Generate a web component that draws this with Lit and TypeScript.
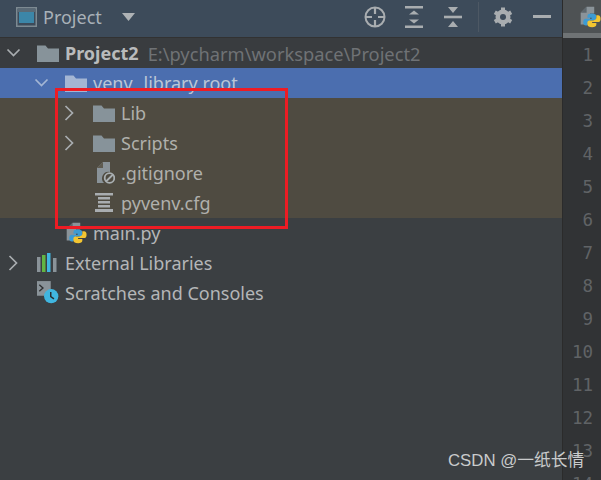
import { LitElement, html, css, svg } from "lit";
import { customElement } from "lit/decorators.js";

const folder = (fill = "#87939a") => html`<svg width="22" height="18" viewBox="0 0 22 18"><path d="M0 1.500h8.500l2.500 3H22V18H0z" fill="${fill}"/></svg>`;
const python = svg`
  <path d="M2 22V8l7-7h9v8H13v13z" fill="#8a9399"/>
  <path d="M9 1v7H2z" fill="#5d666c"/>
  <path d="M15 9c-3 0-5 .8-5 3v2h5v1H8c-2 0-3 1.600-3 4s1 4 3 4h2v-3c0-1.800 1.500-3 3.500-3H18c1.500 0 2.500-1 2.500-2.500V12c0-2-2-3-5.500-3z" fill="#3d9bd3"/>
  <path d="M15.500 28c3 0 5-.8 5-3v-2h-5v-1h7c2 0 3-1.600 3-4s-1-4-3-4h-2v3c0 1.800-1.500 3-3.500 3H12.500c-1.500 0-2.500 1-2.500 2.500V25c0 2 2 3 5.500 3z" fill="#f3c531" transform="translate(0 -3)"/>
`;
const pyIcon = html`<svg width="22" height="24" viewBox="0 0 26 26">${python}</svg>`;
const gitIgnore = html`<svg width="22" height="24" viewBox="0 0 22 24"><path d="M4 22V7l6-6h7v10a6.500 6.500 0 0 0-6 11z" fill="#8a9399"/><path d="M10 1v6H4z" fill="#5f5b50"/><circle cx="16.500" cy="17" r="4.800" fill="none" stroke="#a9afb2" stroke-width="1.800"/><path d="M13 20.500l7-7" stroke="#a9afb2" stroke-width="1.800"/></svg>`;
const cfg = html`<svg width="22" height="22" viewBox="0 0 22 22" fill="#a9adb0"><path d="M2 1h18v2.500H2z"/><path d="M5 5h12v2.500H5zM5 9h12v2.500H5zM5 13h12v2.500H5z"/><path d="M2 17h18v3H2z"/></svg>`;
const libs = html`<svg width="22" height="20" viewBox="0 0 22 20"><rect x="0" y="4" width="3.500" height="15" fill="#8a9399"/><rect x="5" y="2" width="3.500" height="17" fill="#62b543"/><rect x="10" y="0" width="3.500" height="19" fill="#40b6e0"/><rect x="16" y="5" width="3.500" height="14" fill="#8a9399"/></svg>`;
const scratches = html`<svg width="24" height="26" viewBox="0 0 24 26"><path d="M0 0h15v16H0z" fill="#8a9399"/><path d="M2.500 4l4 3.500-4 3.500" fill="none" stroke="#2f3133" stroke-width="1.500"/><circle cx="15.500" cy="16.500" r="7.800" fill="#40b6e0"/><path d="M15 12v5l3.500 2.500" fill="none" stroke="#2b2d30" stroke-width="1.600"/></svg>`;

interface Row { depth: number; label: string; hint?: string; icon: unknown; open?: boolean; tone?: string; bold?: boolean; }
const rows: Row[] = [
  { depth: 0, label: "Project2", hint: "E:\\pycharm\\workspace\\Project2", icon: folder(), open: true, tone: "root", bold: true },
  { depth: 1, label: "venv", hint: "library root", icon: folder("#a4b6d4"), open: true, tone: "sel" },
  { depth: 2, label: "Lib", icon: folder(), open: false, tone: "excl" },
  { depth: 2, label: "Scripts", icon: folder(), open: false, tone: "excl" },
  { depth: 2, label: ".gitignore", icon: gitIgnore, tone: "excl" },
  { depth: 2, label: "pyvenv.cfg", icon: cfg, tone: "excl" },
  { depth: 1, label: "main.py", icon: pyIcon },
  { depth: 0, label: "External Libraries", icon: libs, open: false },
  { depth: 0, label: "Scratches and Consoles", icon: scratches },
];

const chevron = (open?: boolean) =>
  open === undefined
    ? null
    : open
      ? html`<svg width="16" height="14" viewBox="0 0 16 14"><path d="M2.500 3.500l6 6 6-6" fill="none" stroke="currentColor" stroke-width="1.700"/></svg>`
      : html`<svg width="16" height="16" viewBox="0 0 16 16"><path d="M4.500 1l7 7-7 7" fill="none" stroke="currentColor" stroke-width="1.700"/></svg>`;

@customElement("app-root")
export class AppRoot extends LitElement {
  static styles = css`
    :host { display: block; width: 601px; height: 480px; overflow: hidden; position: relative; background: #3c3f41; font-family: "Noto Sans", "Open Sans", sans-serif; font-size: 18px; color: #b4b6b8; }
    .app { display: flex; height: 480px; }
    .panel { width: 562px; flex: none; display: flex; flex-direction: column; border-right: 1px solid #2b2b2b; background: #3b3f42; }
    .header { box-sizing: border-box; height: 38px; flex: none; display: flex; align-items: center; background: #3d4b5a; border-bottom: 1px solid #323232; padding: 0 9px 3px 16px; }
    .title { margin-left: 6px; color: #a9b1b8; }
    .caret { margin-left: 20px; }
    .actions { margin-left: auto; display: flex; align-items: center; }
    .group { display: flex; align-items: center; gap: 17px; }
    .sep { width: 1px; height: 30px; background: #4d5864; margin: 0 13px 0 14px; }
    .tree { display: flex; flex-direction: column; }
    .row { height: 30px; display: flex; align-items: center; white-space: nowrap; }
    .d0 { padding-left: 5px; }
    .d1 { padding-left: 33px; }
    .d2 { padding-left: 61px; }
    .chev { width: 32px; flex: none; display: flex; align-items: center; color: #a9adb0; }
    .ico { width: 22px; flex: none; display: flex; align-items: center; margin-right: 6px; }
    .root { background: #393c3f; }
    .sel { background: #4b6eaf; color: #bcc6d6; }
    .sel .chev { color: #a4b6d4; }
    .sel .hint { color: #bcc6d6; font-size: 18px; margin-left: 11px; }
    .excl { background: #4f4b41; color: #b0b0ac; }
    .bold { font-weight: 700; color: #b9bbbc; }
    .hint { margin-left: 9px; color: #6f7275; font-size: 18.300px; }
    .right { flex: 1; display: flex; flex-direction: column; background: #313335; min-width: 0; }
    .tab { height: 33px; flex: none; background: #4e5254; padding-left: 16px; display: flex; align-items: center; overflow: hidden; }
    .tabline { height: 5px; flex: none; background: #6f7375; }
    .num { height: 33px; flex: none; display: flex; align-items: center; justify-content: flex-end; padding-right: 8px; font-family: "DejaVu Sans Mono", monospace; font-size: 17.500px; color: #606366; }
    .mark { position: absolute; left: 55px; top: 88px; width: 233px; height: 141px; box-sizing: border-box; border: 3px solid #ed1c24; pointer-events: none; }
    .wm { position: absolute; left: 448px; top: 449px; font-family: "Liberation Sans", "Noto Sans CJK SC", sans-serif; font-size: 16.800px; line-height: 24px; color: #c9cbcc; white-space: nowrap; }
  `;

  render() {
    return html`
      <div class="app">
        <div class="panel">
          <div class="header">
            <svg width="21" height="20" viewBox="0 0 21 20"><rect x="0.750" y="0.750" width="19.500" height="18.500" fill="none" stroke="#7d8a92" stroke-width="1.500"/><rect x="2" y="2" width="17" height="3" fill="#5a6a76"/><rect x="3" y="5" width="15" height="11" fill="#3c86a8"/></svg>
            <span class="title">Project</span>
            <svg class="caret" width="13" height="8" viewBox="0 0 13 8"><path d="M0 0h13L6.500 8z" fill="#aeb2b5"/></svg>
            <div class="actions">
              <div class="group">
                <svg width="22" height="22" viewBox="0 0 22 22" fill="none" stroke="#a9adb0" stroke-width="2"><circle cx="11" cy="11" r="9.500"/><path d="M11 1v7M11 14v7M1 11h7M14 11h7" stroke-width="2.200"/></svg>
                <svg width="22" height="22" viewBox="0 0 22 22" fill="#a9adb0"><rect x="2" y="0" width="18" height="2.500"/><rect x="2" y="19.500" width="18" height="2.500"/><path d="M11 4.500l5 4h-10zM11 17.500l-5-4h10z"/></svg>
                <svg width="22" height="20" viewBox="0 0 22 20" fill="#a9adb0"><rect x="2" y="8.700" width="18" height="2.600"/><path d="M6 0h10l-5 6zM6 20h10l-5-6z"/></svg>
              </div>
              <div class="sep"></div>
              <div class="group">
                <svg width="22" height="22" viewBox="0 0 22 22"><circle cx="11" cy="11" r="5.500" fill="none" stroke="#a9adb0" stroke-width="4"/><path d="M11 11L11 1.500M11 11L11 20.500M11 11L2.800 6.300M11 11L19.200 15.700M11 11L2.800 15.700M11 11L19.200 6.300" stroke="#a9adb0" stroke-width="4"/><circle cx="11" cy="11" r="3" fill="#3d4b5a"/></svg>
                <svg width="22" height="4" viewBox="0 0 22 4"><rect x="2" y="0" width="18" height="3" fill="#a9adb0"/></svg>
              </div>
            </div>
          </div>
          <div class="tree">
            ${rows.map(
              (r) => html`<div class="row d${r.depth} ${r.tone ?? ""}">
                <span class="chev">${chevron(r.open)}</span>
                <span class="ico">${r.icon}</span>
                <span class="${r.bold ? "bold" : ""}">${r.label}</span>
                ${r.hint ? html`<span class="hint">${r.hint}</span>` : null}
              </div>`,
            )}
          </div>
        </div>
        <div class="right">
          <div class="tab">${pyIcon}</div>
          <div class="tabline"></div>
          ${Array.from({ length: 14 }, (_, i) => html`<div class="num">${i + 1}</div>`)}
        </div>
      </div>
      <div class="mark"></div>
      <div class="wm">CSDN @一纸长情</div>
    `;
  }
}
